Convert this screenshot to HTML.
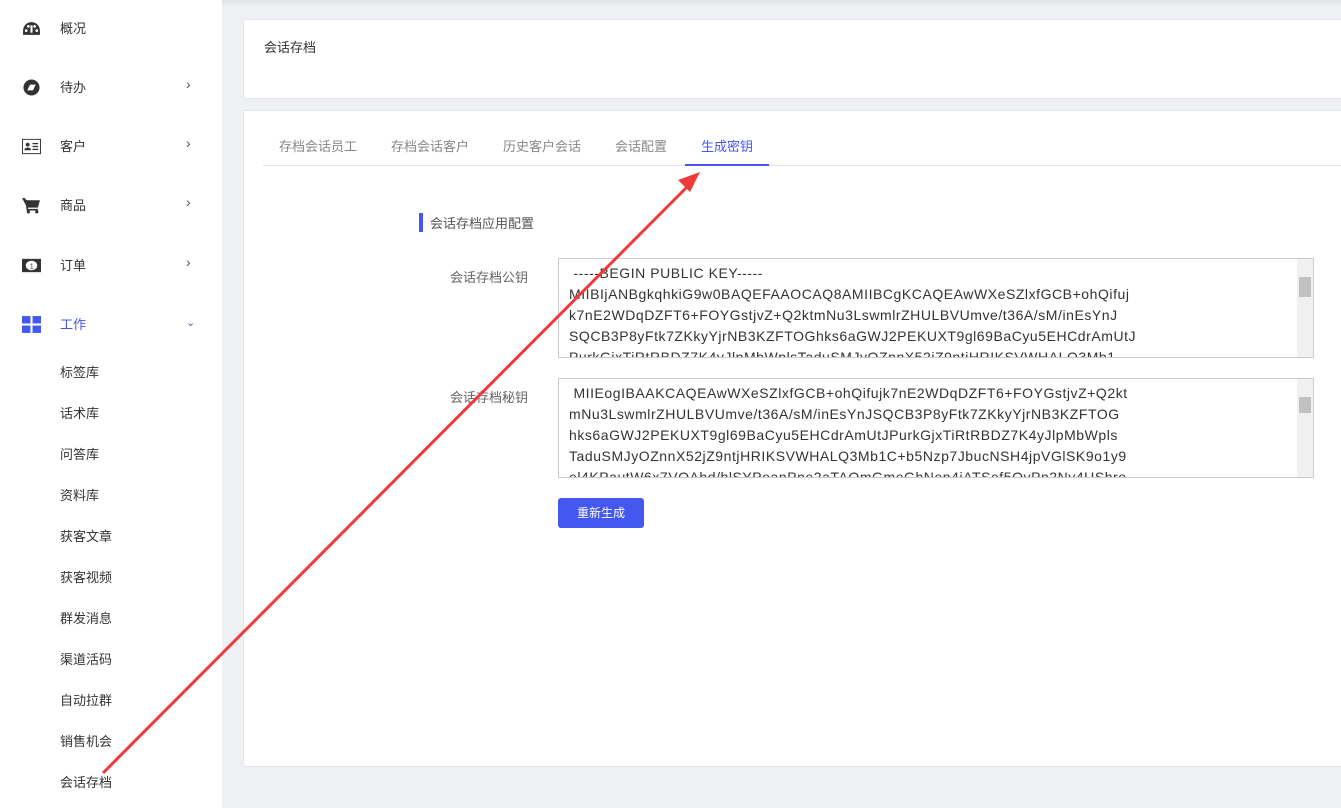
<!DOCTYPE html>
<html><head><meta charset="utf-8"><style>
*{margin:0;padding:0;box-sizing:border-box}
body{width:1341px;height:808px;overflow:hidden;background:#eef0f4;font-family:"Liberation Sans","Noto Sans CJK SC",sans-serif;position:relative;font-size:13px;color:#333}
.sb{position:absolute;left:0;top:0;width:222px;height:808px;background:#fff}
.mi{position:absolute;left:0;width:222px;height:20px;font-size:13px;color:#333}
.mi .ic{position:absolute;left:22px;top:1px;width:19px;height:17px}
.mi .t{position:absolute;left:60px;top:-1px}
.mi .ar{position:absolute;left:186px;top:-2px;color:#555;font-size:14px}
.sub{position:absolute;left:60px;font-size:13px;color:#333}
.card{position:absolute;background:#fff;border:1px solid #e4e6ea;border-radius:3px}
.tab{position:absolute;top:136px;font-size:13px;color:#888}
textarea{position:absolute;left:558px;width:756px;height:100px;border:1px solid #ccc;resize:none;font-family:"Liberation Sans",sans-serif;font-size:14px;letter-spacing:0.55px;line-height:21px;color:#333;padding:4px 20px 0 10px;overflow:hidden;background:#fff;white-space:pre}
.sc{position:absolute;width:16px;background:#f0f0f0;left:1297px}
.lbl{position:absolute;left:450px;font-size:13px;color:#666}
</style></head><body>
<div style="position:absolute;left:0;top:0;width:1341px;height:6px;background:linear-gradient(#e2e3e6,rgba(255,255,255,0))"></div>
<div class="sb">
 <div class="mi" style="top:19px"><svg class="ic" viewBox="0 0 18 16"><path d="M9 2a8 8 0 0 0-8 8v4h16v-4a8 8 0 0 0-8-8z" fill="#333"/><circle cx="4" cy="10" r="1.3" fill="#fff"/><circle cx="6" cy="6" r="1.3" fill="#fff"/><circle cx="12" cy="6" r="1.3" fill="#fff"/><circle cx="14" cy="10" r="1.3" fill="#fff"/><path d="M9 5v7" stroke="#fff" stroke-width="2"/></svg><span class="t">概况</span></div>
 <div class="mi" style="top:78px"><svg class="ic" viewBox="0 0 18 18"><circle cx="9" cy="9" r="8.5" fill="#333"/><path d="M4.5 12l3-6h6l-3 6z" fill="#fff"/></svg><span class="t">待办</span><span class="ar">›</span></div>
 <div class="mi" style="top:137px"><svg class="ic" viewBox="0 0 20 16"><rect x="0.5" y="0.5" width="19" height="15" fill="#fff" stroke="#333"/><circle cx="6" cy="6" r="2" fill="#333"/><path d="M2.5 12a3.5 3 0 0 1 7 0z" fill="#333"/><path d="M11 5h6M11 8h6M11 11h6" stroke="#333" stroke-width="1.3"/></svg><span class="t">客户</span><span class="ar">›</span></div>
 <div class="mi" style="top:196px"><svg class="ic" viewBox="0 0 18 16"><path d="M0 1h3l1 2h13l-2 7H5z" fill="#333"/><path d="M4 3l1 9h10" stroke="#333" stroke-width="1.5" fill="none"/><circle cx="6" cy="14" r="1.5" fill="#333"/><circle cx="14" cy="14" r="1.5" fill="#333"/></svg><span class="t">商品</span><span class="ar">›</span></div>
 <div class="mi" style="top:256px"><svg class="ic" viewBox="0 0 20 14"><rect width="20" height="14" fill="#333"/><ellipse cx="10" cy="7" rx="6" ry="5" fill="#fff"/><text x="8" y="10" font-size="8" fill="#333">1</text></svg><span class="t">订单</span><span class="ar">›</span></div>
 <div class="mi" style="top:315px;color:#4458f0"><svg class="ic" viewBox="0 0 18 16"><rect width="8" height="7" fill="#4458f0"/><rect x="10" width="8" height="7" fill="#4458f0"/><rect y="9" width="8" height="7" fill="#4458f0"/><rect x="10" y="9" width="8" height="7" fill="#4458f0"/></svg><span class="t">工作</span><span class="ar" style="color:#4458f0;font-size:11px;top:1px">⌄</span></div>
 <div class="sub" style="top:362px">标签库</div>
 <div class="sub" style="top:403px">话术库</div>
 <div class="sub" style="top:444px">问答库</div>
 <div class="sub" style="top:485px">资料库</div>
 <div class="sub" style="top:526px">获客文章</div>
 <div class="sub" style="top:567px">获客视频</div>
 <div class="sub" style="top:608px">群发消息</div>
 <div class="sub" style="top:649px">渠道活码</div>
 <div class="sub" style="top:690px">自动拉群</div>
 <div class="sub" style="top:731px">销售机会</div>
 <div class="sub" style="top:772px">会话存档</div>
</div>
<div class="card" style="left:243px;top:19px;width:1110px;height:80px"><div style="position:absolute;left:20px;top:17px;font-size:13px;color:#333">会话存档</div></div>
<div class="card" style="left:243px;top:110px;width:1110px;height:657px"></div>
<div style="position:absolute;left:263px;top:165px;width:1078px;height:1px;background:#e2e4e8"></div>
<div class="tab" style="left:279px">存档会话员工</div>
<div class="tab" style="left:391px">存档会话客户</div>
<div class="tab" style="left:503px">历史客户会话</div>
<div class="tab" style="left:615px">会话配置</div>
<div class="tab" style="left:701px;color:#4458f0">生成密钥</div>
<div style="position:absolute;left:685px;top:164px;width:84px;height:2px;background:#4458f0"></div>
<div style="position:absolute;left:419px;top:213px;width:4px;height:19px;background:#4458f0"></div>
<div style="position:absolute;left:430px;top:213px;font-size:13px;color:#555">会话存档应用配置</div>
<div class="lbl" style="top:267px">会话存档公钥</div>
<div class="lbl" style="top:387px">会话存档秘钥</div>
<textarea style="top:258px"> -----BEGIN PUBLIC KEY-----
MIIBIjANBgkqhkiG9w0BAQEFAAOCAQ8AMIIBCgKCAQEAwWXeSZlxfGCB+ohQifuj
k7nE2WDqDZFT6+FOYGstjvZ+Q2ktmNu3LswmlrZHULBVUmve/t36A/sM/inEsYnJ
SQCB3P8yFtk7ZKkyYjrNB3KZFTOGhks6aGWJ2PEKUXT9gl69BaCyu5EHCdrAmUtJ
PurkGjxTiRtRBDZ7K4yJlpMbWplsTaduSMJyOZnnX52jZ9ntjHRIKSVWHALQ3Mb1</textarea>
<div class="sc" style="top:259px;height:98px"><div style="position:absolute;left:2px;top:18px;width:12px;height:20px;background:#c1c1c1"></div></div>
<textarea style="top:378px"> MIIEogIBAAKCAQEAwWXeSZlxfGCB+ohQifujk7nE2WDqDZFT6+FOYGstjvZ+Q2kt
mNu3LswmlrZHULBVUmve/t36A/sM/inEsYnJSQCB3P8yFtk7ZKkyYjrNB3KZFTOG
hks6aGWJ2PEKUXT9gl69BaCyu5EHCdrAmUtJPurkGjxTiRtRBDZ7K4yJlpMbWpls
TaduSMJyOZnnX52jZ9ntjHRIKSVWHALQ3Mb1C+b5Nzp7JbucNSH4jpVGlSK9o1y9
el4KPautW6x7VOAhd/hlSYPeanPne2aTAOmGmeGhNen4iATSef5OyPn2Ny4UShro</textarea>
<div class="sc" style="top:379px;height:98px"><div style="position:absolute;left:2px;top:18px;width:12px;height:16px;background:#c1c1c1"></div></div>
<div style="position:absolute;left:558px;top:498px;width:86px;height:30px;background:#4458f0;border-radius:3px;color:#fff;font-size:12px;text-align:center;line-height:30px">重新生成</div>
<svg style="position:absolute;left:0;top:0" width="1341" height="808"><line x1="103" y1="773" x2="688" y2="186" stroke="#f03a3a" stroke-width="3"/><path d="M700 172l-22 8 12 12z" fill="#f03a3a"/></svg>
</body></html>
